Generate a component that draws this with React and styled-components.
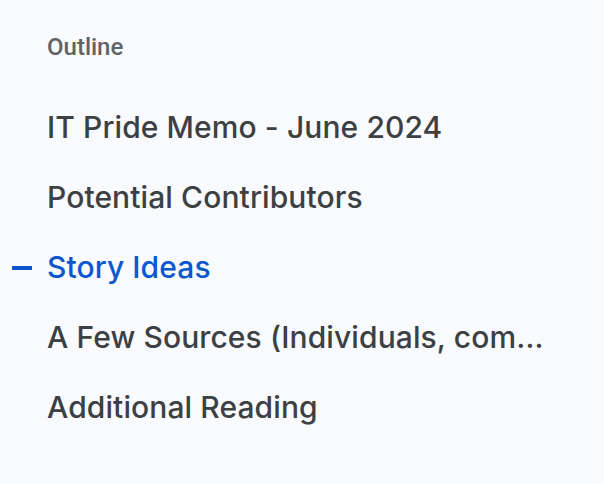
import styled, { createGlobalStyle } from 'styled-components';

const GlobalStyle = createGlobalStyle`
  html, body {
    margin: 0;
    padding: 0;
    background: #f8fafd;
  }
`

const Panel = styled.nav`
  width: 604px;
  height: 484px;
  background: #f8fafd;
  padding: 30px 0 0 0;
  box-sizing: border-box;
  display: flex;
  flex-direction: column;
`

const Heading = styled.div`
  padding-left: 47px;
  font-family: Roboto, "Liberation Sans", sans-serif;
  font-weight: 500;
  font-size: 24px;
  line-height: 34px;
  color: #5f6368;
  margin-bottom: 28px;
`

const List = styled.ul`
  list-style: none;
  margin: 0;
  padding: 0;
  display: flex;
  flex-direction: column;
`

const Row = styled.li`
  position: relative;
  display: flex;
  align-items: center;
  height: 70px;
  padding-left: 47px;
`

const Marker = styled.span`
  position: absolute;
  left: 12px;
  top: 50%;
  width: 20px;
  height: 4px;
  margin-top: -1px;
  background: #0b57d0;
`

const Label = styled.span`
  display: block;
  max-width: 504px;
  white-space: nowrap;
  overflow: hidden;
  text-overflow: ellipsis;
  font-family: Inter, "Liberation Sans", sans-serif;
  font-weight: 500;
  font-size: 30px;
  letter-spacing: 0.1px;
  color: ${props => props.active ? '#0b57d0' : '#3c4043'};
`

const items = [
  'IT Pride Memo - June 2024',
  'Potential Contributors',
  'Story Ideas',
  'A Few Sources (Individuals, companies and organisations)',
  'Additional Reading',
]

const App = () => (
  <>
    <GlobalStyle />
    <Panel>
      <Heading>Outline</Heading>
      <List>
        {items.map((text, i) => (
          <Row key={text}>
            {i === 2 && <Marker />}
            <Label active={i === 2}>{text}</Label>
          </Row>
        ))}
      </List>
    </Panel>
  </>
)

export default App;
